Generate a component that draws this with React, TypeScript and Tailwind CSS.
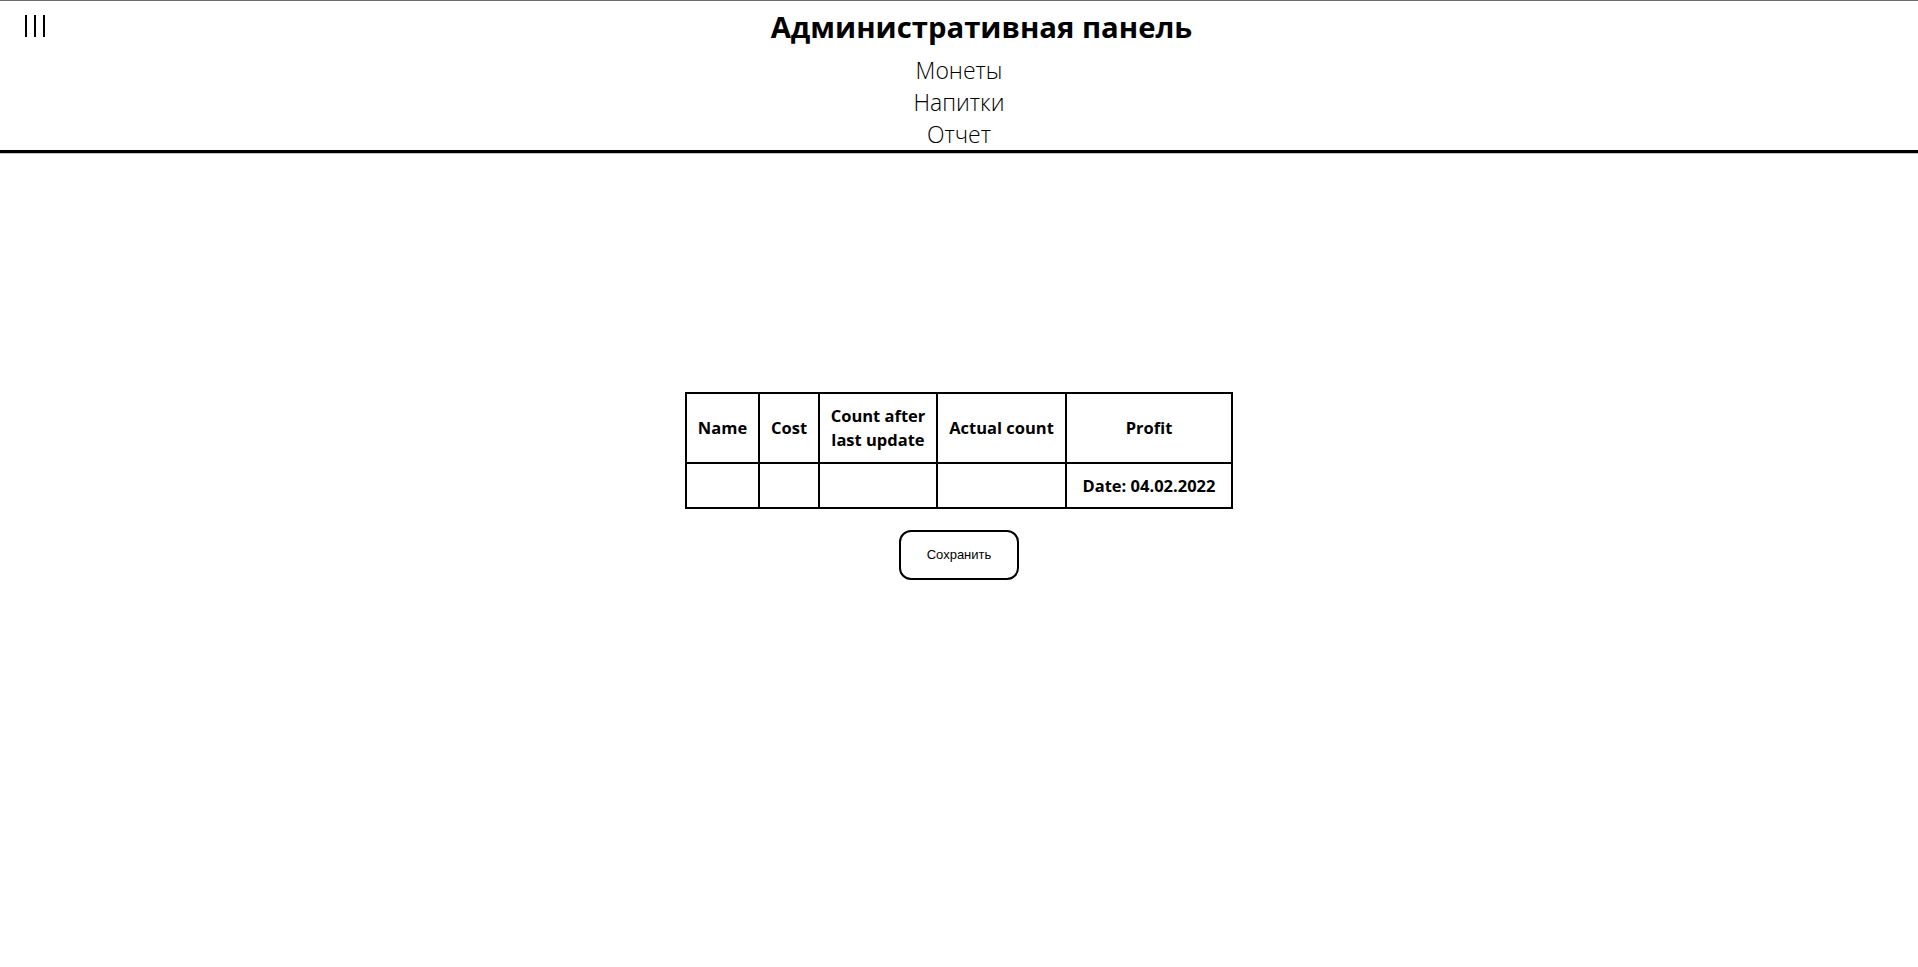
import React from 'react';

const navItems = ['Монеты', 'Напитки', 'Отчет'];

const columns = [
    { title: 'Name', width: 'w-[73px]' },
    { title: 'Cost', width: 'w-[60px]' },
    { title: 'Count after last update', width: 'w-[118px]' },
    { title: 'Actual count', width: 'w-[129px]' },
    { title: 'Profit', width: 'w-[166px]' },
];

export default function App() {
    return (
        <div className="min-h-screen bg-white text-black font-['Open_Sans',sans-serif]">
            {/* шапка */}
            <header className="border-t border-[#6b6b6b] border-b-[3px] border-b-black shadow-[0_1px_0_#c4c4c4]">
                <div className="flex items-start">
                    <button className="flex gap-[7px] pl-[25px] pt-[14px]" aria-label="menu">
                        <span className="block w-[2px] h-[22px] bg-black" />
                        <span className="block w-[2px] h-[22px] bg-black" />
                        <span className="block w-[2px] h-[22px] bg-black" />
                    </button>
                    <h1 className="flex-1 text-center mt-[6px] text-[29.3px] leading-[40px] font-bold">
                        Административная панель
                    </h1>
                </div>
                <nav className="flex flex-col items-center mt-[7px] text-[23px] font-light leading-[32px]">
                    {navItems.map((item) => (
                        <a key={item} href="#" className="text-black">
                            {item}
                        </a>
                    ))}
                </nav>
            </header>

            {/* отчет */}
            <main className="flex flex-col items-center pt-[239px]">
                <table className="table-fixed border-collapse border-2 border-black text-[16.5px] font-bold leading-[24px]">
                    <thead>
                        <tr className="h-[70px]">
                            {columns.map((col) => (
                                <th key={col.title} className={`${col.width} border-2 border-black px-[8px] text-center font-bold`}>
                                    {col.title}
                                </th>
                            ))}
                        </tr>
                    </thead>
                    <tbody>
                        <tr className="h-[45px]">
                            <td className="border-2 border-black" />
                            <td className="border-2 border-black" />
                            <td className="border-2 border-black" />
                            <td className="border-2 border-black" />
                            <td className="border-2 border-black px-[6px] text-center whitespace-nowrap">Date: 04.02.2022</td>
                        </tr>
                    </tbody>
                </table>

                <button className="mt-[21px] w-[120px] h-[50px] border-2 border-black rounded-[12px] bg-white text-[13px] font-['Liberation_Sans',Arial,sans-serif]">
                    Сохранить
                </button>
            </main>
        </div>
    );
}
